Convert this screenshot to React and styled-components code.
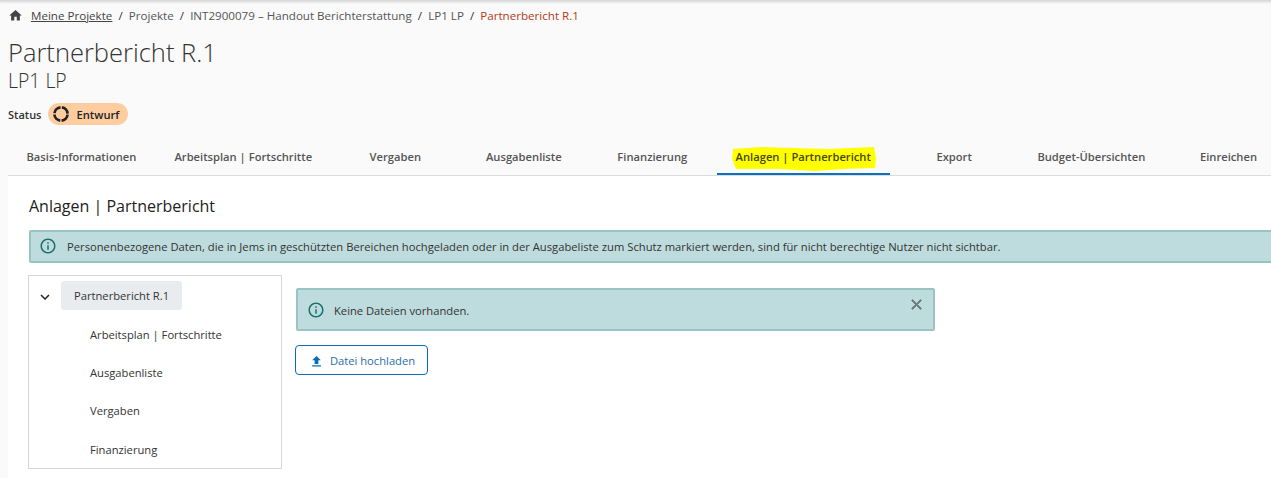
import React from "react";
import styled, { createGlobalStyle } from "styled-components";

const GlobalStyle = createGlobalStyle`
  html, body {
    margin: 0;
    padding: 0;
    height: 100%;
    overflow: hidden;
    background: #fafafa;
    font-family: "Open Sans", "Liberation Sans", sans-serif;
    color: #222;
  }
`;

const Page = styled.div`
  position: relative;
  width: 1271px;
  height: 478px;
  overflow: hidden;
  background: #fafafa;
  box-shadow: inset 0 4px 3px -2px #d4d4d4;
`;

const Header = styled.header`
  padding: 7px 0 0 8px;
`;

const Crumbs = styled.nav`
  display: flex;
  align-items: center;
  height: 17px;
  font-size: 11.6px;
  color: #555;
`;

const HomeIcon = styled.svg`
  width: 15px;
  height: 15px;
  margin-right: 8px;
  fill: #444;
`;

const CrumbLink = styled.a`
  color: #444;
  text-decoration: underline;
`;

const Sep = styled.span`
  margin: 0 6.1px;
  color: #333;
`;

const Current = styled.span`
  color: #b23c17;
`;

const Title = styled.h1`
  margin: 11px 0 0;
  font-size: 25.5px;
  line-height: 34px;
  font-weight: 300;
  color: #333;
`;

const Subtitle = styled.h2`
  margin: 0;
  font-size: 19.4px;
  line-height: 24px;
  font-weight: 300;
  color: #333;
`;

const StatusRow = styled.div`
  display: flex;
  align-items: center;
  gap: 7px;
  margin-top: 10px;
  font-size: 11px;
  font-weight: 600;
  color: #333;
`;

const Pill = styled.span`
  display: flex;
  align-items: center;
  gap: 6px;
  height: 22px;
  padding: 0 9px 0 4px;
  border-radius: 11px;
  background: #fdcd9f;
  font-size: 11.2px;
  font-weight: 600;
  color: #222;
`;

const TabBar = styled.div`
  display: flex;
  height: 38px;
  margin-top: 12px;
  margin-left: 7.5px;
`;

const Tab = styled.div`
  position: relative;
  flex: none;
  box-sizing: border-box;
  min-width: 128.5px;
  padding: 0 19px;
  height: 38px;
  display: flex;
  align-items: center;
  justify-content: center;
  font-size: 11.2px;
  font-weight: 600;
  white-space: nowrap;
  color: #555;
  box-shadow: ${(p) => (p.$active ? "inset 0 -2px 0 #0b72c0" : "none")};
`;

const TabLabel = styled.span`
  position: relative;
`;

const Marker = styled.svg`
  position: absolute;
  left: -4px;
  top: -3px;
  width: 145px;
  height: 26px;
  fill: #ffff00;
`;

const MarkedText = styled.span`
  position: relative;
  color: #46460f;
`;

const Panel = styled.main`
  margin-left: 8px;
  border-top: 1px solid #dcdcdc;
  background: #fff;
  height: 303px;
  padding: 20px 0 0 21px;
`;

const PanelTitle = styled.h3`
  margin: 0;
  font-size: 16px;
  line-height: 20px;
  font-weight: 400;
  color: #222;
`;

const Alert = styled.div`
  position: relative;
  box-sizing: border-box;
  display: flex;
  align-items: center;
  background: #bedcdd;
  border: 2px solid #9ac4c3;
  border-radius: 2px;
  color: #333;
  font-size: 11.2px;
`;

const WideAlert = styled(Alert)`
  width: 1260px;
  height: 33px;
  margin-top: 14px;
  padding: 0 0 1px 8px;
  gap: 10px;
  font-size: 11.22px;
`;

const FileAlert = styled(Alert)`
  width: 639px;
  height: 43px;
  padding: 1px 0 0 9px;
  gap: 9px;
`;

const InfoIcon = styled.svg`
  width: 18px;
  height: 18px;
  flex: none;
  fill: #17716e;
`;

const CloseIcon = styled.svg`
  position: absolute;
  right: 8px;
  top: 6px;
  width: 17px;
  height: 17px;
  fill: #6c7c7d;
  stroke: #6c7c7d;
  stroke-width: 1.2;
`;

const Columns = styled.div`
  display: flex;
  align-items: flex-start;
  margin-top: 12px;
  margin-left: -1px;
`;

const Tree = styled.div`
  box-sizing: border-box;
  width: 254px;
  height: 194px;
  border: 1px solid #d2d8dc;
  padding: 5px 0 0 7px;
  flex: none;
`;

const TreeRoot = styled.div`
  display: flex;
  align-items: center;
  margin-bottom: 5px;
`;

const Chevron = styled.svg`
  width: 18px;
  height: 18px;
  margin: 2px 7px 0 0;
  fill: #222;
`;

const RootChip = styled.div`
  display: flex;
  align-items: center;
  width: 121px;
  height: 29px;
  padding-left: 13px;
  box-sizing: border-box;
  background: #e9ecef;
  border-radius: 3px;
  font-size: 11.2px;
  color: #333;
`;

const TreeChild = styled.div`
  display: flex;
  align-items: center;
  height: 38.3px;
  padding-left: 54px;
  font-size: 11.2px;
  color: #333;
`;

const Content = styled.section`
  padding: 13px 0 0 14px;
`;

const UploadButton = styled.button`
  display: flex;
  align-items: center;
  justify-content: center;
  gap: 6px;
  box-sizing: border-box;
  width: 133px;
  height: 30px;
  margin: 14px 0 0 -1px;
  padding: 0 0 0 1px;
  background: #fff;
  border: 1px solid #0b6cb4;
  border-radius: 4px;
  color: #2a6ea8;
  font-family: inherit;
  font-size: 11.2px;
`;

const UploadIcon = styled.svg`
  width: 15px;
  height: 15px;
  margin-top: 2px;
  fill: #0b6cb4;
`;

const tabs = [
  "Basis-Informationen",
  "Arbeitsplan | Fortschritte",
  "Vergaben",
  "Ausgabenliste",
  "Finanzierung",
  "Anlagen | Partnerbericht",
  "Export",
  "Budget-Übersichten",
  "Einreichen",
];

const children = ["Arbeitsplan | Fortschritte", "Ausgabenliste", "Vergaben", "Finanzierung"];

const Info = () => (
  <InfoIcon viewBox="0 0 24 24">
    <path d="M11 7h2v2h-2zm0 4h2v6h-2zm1-9C6.48 2 2 6.48 2 12s4.48 10 10 10 10-4.48 10-10S17.52 2 12 2zm0 18c-4.41 0-8-3.59-8-8s3.59-8 8-8 8 3.59 8 8-3.59 8-8 8z" />
  </InfoIcon>
);

export default function App() {
  return (
    <Page>
      <GlobalStyle />
      <Header>
        <Crumbs>
          <HomeIcon viewBox="0 0 24 24">
            <path d="M10 20v-6h4v6h5v-8h3L12 3 2 12h3v8z" />
          </HomeIcon>
          <CrumbLink>Meine Projekte</CrumbLink>
          <Sep>/</Sep>
          <span>Projekte</span>
          <Sep>/</Sep>
          <span>INT2900079 – Handout Berichterstattung</span>
          <Sep>/</Sep>
          <span>LP1 LP</span>
          <Sep>/</Sep>
          <Current>Partnerbericht R.1</Current>
        </Crumbs>
        <Title>Partnerbericht R.1</Title>
        <Subtitle>LP1 LP</Subtitle>
        <StatusRow>
          Status
          <Pill>
            <svg width="18" height="18" viewBox="0 0 18 18" fill="none" stroke="#222" strokeWidth="2.7">
              <circle cx="9" cy="9" r="6.6" strokeDasharray="9 1.37" strokeDashoffset="-0.7" />
            </svg>
            Entwurf
          </Pill>
        </StatusRow>
      </Header>
      <TabBar>
        {tabs.map((t, i) =>
          i === 5 ? (
            <Tab key={t} $active>
              <TabLabel>
                <Marker viewBox="0 0 145 26" preserveAspectRatio="none">
                  <path d="M1 3 L28 1 L62 2 L96 3 L142 1 L144 12 L143 22 L112 23 L84 25 L46 23 L4 23 L0 13 Z" />
                </Marker>
                <MarkedText>{t}</MarkedText>
              </TabLabel>
            </Tab>
          ) : (
            <Tab key={t}>{t}</Tab>
          )
        )}
      </TabBar>
      <Panel>
        <PanelTitle>Anlagen | Partnerbericht</PanelTitle>
        <WideAlert>
          <Info />
          Personenbezogene Daten, die in Jems in geschützten Bereichen hochgeladen oder in der Ausgabeliste zum Schutz markiert werden, sind für nicht berechtige Nutzer nicht sichtbar.
        </WideAlert>
        <Columns>
          <Tree>
            <TreeRoot>
              <Chevron viewBox="0 0 24 24">
                <path d="M16.59 8.59L12 13.17 7.41 8.59 6 10l6 6 6-6z" />
              </Chevron>
              <RootChip>Partnerbericht R.1</RootChip>
            </TreeRoot>
            {children.map((c) => (
              <TreeChild key={c}>{c}</TreeChild>
            ))}
          </Tree>
          <Content>
            <FileAlert>
              <Info />
              Keine Dateien vorhanden.
              <CloseIcon viewBox="0 0 24 24">
                <path d="M19 6.41L17.59 5 12 10.59 6.41 5 5 6.41 10.59 12 5 17.59 6.41 19 12 13.41 17.59 19 19 17.59 13.41 12z" />
              </CloseIcon>
            </FileAlert>
            <UploadButton>
              <UploadIcon viewBox="0 0 24 24">
                <path d="M9 16h6v-6h4l-7-7-7 7h4zm-4 2h14v2H5z" />
              </UploadIcon>
              Datei hochladen
            </UploadButton>
          </Content>
        </Columns>
      </Panel>
    </Page>
  );
}
